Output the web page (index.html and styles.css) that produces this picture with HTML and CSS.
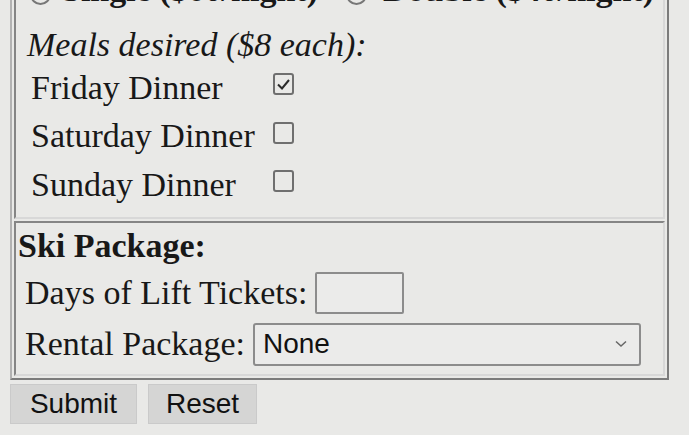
FILE: index.html
```html
<!DOCTYPE html>
<html>
<head>
<meta charset="utf-8">
<title>Ski Trip Registration</title>
<link rel="stylesheet" href="styles.css">
</head>
<body>
<form class="page">
  <div class="outer">
    <div class="cell lodging">
      <div class="room">
        <span class="radio radio1 checked"></span><b>Single ($60/night)</b>
        <span class="radio radio2"></span><b>Double ($40/night)</b>
      </div>
      <div class="meals-title">Meals desired ($8 each):</div>
      <div class="meals">
        <span class="meal">Friday Dinner</span>
        <span class="box"><svg width="17" height="18" viewBox="0 0 17 18"><polyline points="3,9.5 7,13.5 14,5" fill="none" stroke="#2a2a2a" stroke-width="2"/></svg></span>
        <span class="meal">Saturday Dinner</span>
        <span class="box"></span>
        <span class="meal">Sunday Dinner</span>
        <span class="box"></span>
      </div>
    </div>
    <div class="cell ski">
      <div class="ski-title">Ski Package:</div>
      <div class="field days"><span>Days of Lift Tickets:</span><span class="text-input"></span></div>
      <div class="field rental"><span>Rental Package:</span><span class="select"><span>None</span><svg width="12" height="8" viewBox="0 0 12 8"><polyline points="1,1.5 6,6 11,1.5" fill="none" stroke="#666" stroke-width="1.5"/></svg></span></div>
    </div>
  </div>
  <div class="buttons">
    <button type="button" class="btn submit">Submit</button>
    <button type="button" class="btn reset">Reset</button>
  </div>
</form>
</body>
</html>
```
FILE: styles.css
```css
html, body {
  margin: 0;
  background: #e9e9e7;
  overflow: hidden;
}
body {
  color: #181818;
  font-family: "Liberation Serif", "Times New Roman", serif;
  font-size: 34px;
}
.page {
  margin: -40px 0 0 10px;
  width: 659px;
}
.outer {
  border: 2px solid;
  border-color: #b2b2b2 #7c7c7c #7c7c7c #b2b2b2;
  padding: 2px;
  display: flex;
  flex-direction: column;
  gap: 2px;
}
.cell {
  border: 2px solid;
  border-color: #858585 #d8d8d8 #d8d8d8 #858585;
}
.lodging {
  padding: 5px 2px 8px 2px;
}
.room {
  display: flex;
  align-items: center;
  height: 37px;
  line-height: 37px;
  margin-bottom: 18px;
  white-space: nowrap;
}
.radio {
  width: 21px;
  height: 21px;
  box-sizing: border-box;
  border: 2px solid #777;
  border-radius: 50%;
  margin-top: 10px;
  display: flex;
  align-items: center;
  justify-content: center;
}
.radio1 {
  margin-left: 12px;
  margin-right: 11px;
}
.radio2 {
  margin-left: 28px;
  margin-right: 16px;
}
.radio.checked::after {
  content: "";
  width: 9px;
  height: 9px;
  border-radius: 50%;
  background: #333;
}
.meals-title {
  font-style: italic;
  line-height: 37px;
  padding-left: 9px;
}
.meals {
  display: grid;
  grid-template-columns: auto auto;
  justify-content: start;
  grid-auto-rows: 48.5px;
  align-items: center;
  column-gap: 18px;
  padding-left: 13px;
}
.meal {
  line-height: 39px;
  white-space: nowrap;
}
.box {
  width: 21px;
  height: 22px;
  box-sizing: border-box;
  border: 2px solid #6f6f6f;
  border-radius: 3px;
  margin-bottom: 6px;
  display: flex;
  align-items: center;
  justify-content: center;
}
.ski {
  padding: 4px 2px 6px 2px;
}
.ski-title {
  font-weight: bold;
  line-height: 37px;
}
.field {
  display: flex;
  align-items: center;
  gap: 8px;
  padding-left: 7px;
  white-space: nowrap;
}
.days {
  margin-top: 6px;
  height: 46px;
}
.rental {
  margin-top: 5px;
  height: 47px;
}
.text-input {
  width: 89px;
  height: 42px;
  box-sizing: border-box;
  border: 2px solid #8c8c8c;
  border-radius: 2px;
  background: #ebebea;
}
.select {
  width: 388px;
  height: 43px;
  box-sizing: border-box;
  border: 2px solid #8c8c8c;
  border-radius: 3px;
  background: #ebebea;
  display: flex;
  align-items: center;
  justify-content: space-between;
  padding: 0 12px 0 8px;
  font-family: "Liberation Sans", Arial, sans-serif;
  font-size: 28px;
  color: #111;
}
.buttons {
  display: flex;
  gap: 11px;
  margin-top: 4px;
}
.btn {
  height: 40px;
  padding: 0;
  margin: 0;
  background: #d5d5d4;
  border: 1px solid #cacaca;
  border-radius: 0;
  font-family: "Liberation Sans", Arial, sans-serif;
  font-size: 28px;
  color: #111;
}
.submit {
  width: 127px;
}
.reset {
  width: 109px;
}
```
